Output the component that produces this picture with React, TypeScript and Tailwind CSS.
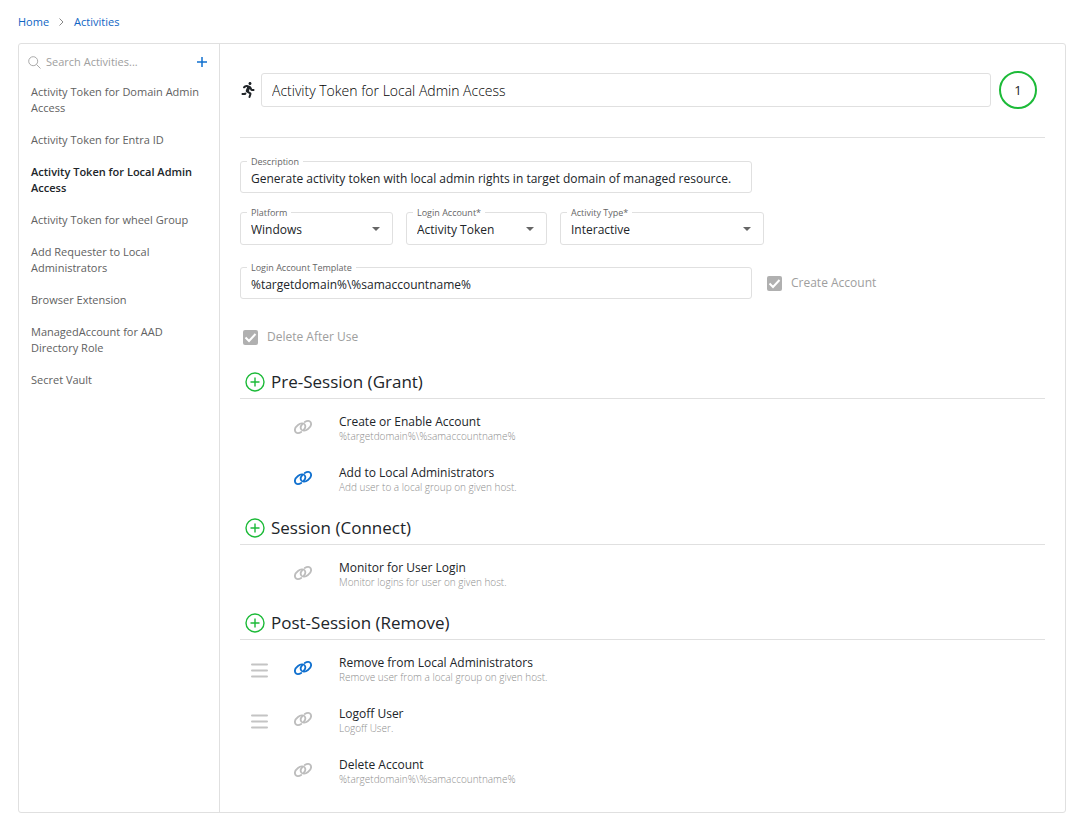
import { useState } from 'react';
import type { ReactNode } from 'react';
import { FaRunning } from 'react-icons/fa';

type Step = { title: string; detail: string; linked?: boolean; draggable?: boolean };

const ACTIVITIES = [
  'Activity Token for Domain Admin Access',
  'Activity Token for Entra ID',
  'Activity Token for Local Admin Access',
  'Activity Token for wheel Group',
  'Add Requester to Local Administrators',
  'Browser Extension',
  'ManagedAccount for AAD Directory Role',
  'Secret Vault',
];

const SECTIONS: Array<{ title: string; steps: Step[] }> = [
  {
    title: 'Pre-Session (Grant)',
    steps: [
      { title: 'Create or Enable Account', detail: '%targetdomain%\\%samaccountname%' },
      { title: 'Add to Local Administrators', detail: 'Add user to a local group on given host.', linked: true },
    ],
  },
  {
    title: 'Session (Connect)',
    steps: [{ title: 'Monitor for User Login', detail: 'Monitor logins for user on given host.' }],
  },
  {
    title: 'Post-Session (Remove)',
    steps: [
      { title: 'Remove from Local Administrators', detail: 'Remove user from a local group on given host.', linked: true, draggable: true },
      { title: 'Logoff User', detail: 'Logoff User.', draggable: true },
      { title: 'Delete Account', detail: '%targetdomain%\\%samaccountname%' },
    ],
  },
];

function ChainIcon() {
  return (
    <svg viewBox="0 0 18 14" className="h-[14px] w-[18px]" fill="none" stroke="currentColor" strokeWidth="1.8" strokeLinecap="round">
      <path d="M7.2 12C4.8 13.5 2.4 13.4 1.4 11.8C0.4 9.8 1.5 6.9 4 5C6.4 3.2 9.4 2.8 10.7 4.5C11.8 6 11.2 8.2 9.7 9.9" />
      <path d="M10.8 2C13.2 0.5 15.6 0.6 16.6 2.2C17.6 4.2 16.5 7.1 14 9C11.6 10.8 8.6 11.2 7.3 9.5C6.2 8 6.8 5.8 8.3 4.1" />
    </svg>
  );
}

function PlusCircleIcon() {
  return (
    <svg viewBox="0 0 20 20" className="size-5" fill="none" stroke="currentColor" strokeWidth="1.4">
      <circle cx="10" cy="10" r="9" />
      <path d="M10 5.5V14.5M5.5 10H14.5" />
    </svg>
  );
}

function Field({ id, label, className, children }: { id: string; label: string; className: string; children: ReactNode }) {
  return (
    <div className={`relative rounded-[3px] border border-[#e0e0e0] ${className}`}>
      <label htmlFor={id} className="absolute -top-2 left-[6px] bg-white px-1 text-[9px] leading-4 text-[#666]">{label}</label>
      {children}
    </div>
  );
}

function TextField({ id, label, value }: { id: string; label: string; value: string }) {
  return (
    <Field id={id} label={label} className="w-full max-w-[512px]">
      <input id={id} defaultValue={value} className="block h-[30px] w-full px-[10px] pt-[2px] text-xs outline-none" />
    </Field>
  );
}

function SelectField({ id, label, value, className }: { id: string; label: string; value: string; className: string }) {
  return (
    <Field id={id} label={label} className={className}>
      <select id={id} defaultValue={value} className="block h-[31px] w-full appearance-none bg-transparent px-[10px] pt-[2px] text-xs outline-none">
        <option>{value}</option>
      </select>
      <svg viewBox="0 0 8 4" className="pointer-events-none absolute top-[14px] right-3 h-1 w-2 fill-[#666]"><path d="M0 0H8L4 4Z" /></svg>
    </Field>
  );
}

function DisabledCheck({ label }: { label: string }) {
  return (
    <label className="flex items-center gap-[9px] text-xs leading-5 text-[#9e9e9e]">
      <span className="relative block size-[15px]">
        <input type="checkbox" checked disabled readOnly className="block size-[15px] appearance-none rounded-[2px] bg-[#b0b0b0]" />
        <svg viewBox="0 0 15 15" className="absolute inset-0" fill="none" stroke="white" strokeWidth="2"><path d="M2.5 7.5L6 11L12.5 4" /></svg>
      </span>
      {label}
    </label>
  );
}

function StepRow({ step }: { step: Step }) {
  return (
    <li className="flex h-[51px] items-start">
      <div className="w-[54px] pt-[15px] pl-[11px]">
        {step.draggable && (
          <button aria-label="Reorder" className="block text-[#c4c4c4]">
            <svg viewBox="0 0 17 15" className="h-[15px] w-[17px]" stroke="currentColor" strokeWidth="2" strokeLinecap="round"><path d="M1 1.5H16M1 7.5H16M1 13.5H16" /></svg>
          </button>
        )}
      </div>
      <button aria-label="Toggle link" className={`mt-[13px] w-[45px] ${step.linked ? 'text-[#1070cf]' : 'text-[#bdbdbd]'}`}><ChainIcon /></button>
      <div className="pt-[6px]">
        <p className="text-xs leading-[17px]">{step.title}</p>
        <p className="text-[10px] leading-[13px] font-light text-[#8e8e8e]">{step.detail}</p>
      </div>
    </li>
  );
}

export default function App() {
  const [active, setActive] = useState(ACTIVITIES[2]);

  return (
    <div className="px-[18px] py-[13px] font-['Open_Sans','Noto_Sans',sans-serif] text-[#212529]">
      <nav className="flex items-center gap-[10px] text-[11px] leading-[18px] text-[#0f65c4]">
        <a href="#home">Home</a>
        <svg viewBox="0 0 5 8" className="h-2 w-[5px]" fill="none" stroke="#888"><path d="M0.5 0.5L4 4L0.5 7.5" /></svg>
        <a href="#activities">Activities</a>
      </nav>

      <div className="mt-3 flex rounded-[3px] border border-[#e0e0e0]">
        <aside className="w-[201px] shrink-0 border-r border-[#e0e0e0] pt-2">
          <div className="flex h-5 items-center pr-3 pl-[9px]">
            <svg viewBox="0 0 13 13" className="size-[13px] shrink-0" fill="none" stroke="#aaa"><circle cx="5.2" cy="5.2" r="4.5" /><path d="M8.4 8.4L12.5 12.5" /></svg>
            <input aria-label="Search Activities" placeholder="Search Activities..." className="ml-[5px] min-w-0 flex-1 text-[11px] outline-none placeholder:text-[#a0a0a0]" />
            <button aria-label="Add activity" className="text-[#1070cf]">
              <svg viewBox="0 0 10 10" className="size-[10px]" stroke="currentColor" strokeWidth="1.5"><path d="M5 0V10M0 5H10" /></svg>
            </button>
          </div>
          <ul className="mt-1">
            {ACTIVITIES.map((name) => (
              <li key={name}>
                <button
                  onClick={() => setActive(name)}
                  className={`block w-full px-3 py-2 text-left text-[11px] leading-4 ${name === active ? 'font-semibold text-[#212529]' : 'text-[#616161]'}`}
                >
                  {name}
                </button>
              </li>
            ))}
          </ul>
        </aside>

        <main className="min-w-0 flex-1 px-5 pt-[27px] pb-[11px]">
          <header className="flex items-center border-b border-[#e0e0e0] pb-7">
            <FaRunning className="size-4 shrink-0" />
            <input aria-label="Activity name" defaultValue={ACTIVITIES[2]} className="mr-2 ml-[5px] h-[34px] min-w-0 flex-1 rounded-[3px] border border-[#e0e0e0] px-[10px] pt-px text-[14px] font-light text-black outline-none" />
            <span className="mr-2 flex size-[38px] items-center justify-center rounded-full border-2 border-[#1cba38] pt-px text-[13px]">1</span>
          </header>

          <div className="mt-[23px]">
            <TextField id="description" label="Description" value="Generate activity token with local admin rights in target domain of managed resource." />
          </div>
          <div className="mt-[19px] flex gap-[13px]">
            <SelectField id="platform" label="Platform" value="Windows" className="w-[153px]" />
            <SelectField id="login" label="Login Account*" value="Activity Token" className="w-[141px]" />
            <SelectField id="type" label="Activity Type*" value="Interactive" className="w-[204px]" />
          </div>
          <div className="mt-[22px] flex items-center gap-[15px]">
            <TextField id="template" label="Login Account Template" value="%targetdomain%\%samaccountname%" />
            <DisabledCheck label="Create Account" />
          </div>
          <div className="mt-7 mb-4 pl-[3px]">
            <DisabledCheck label="Delete After Use" />
          </div>

          {SECTIONS.map((section) => (
            <section key={section.title}>
              <div className="flex items-center gap-[6px] border-b border-[#e0e0e0] pt-[7px] pb-1 pl-[5px]">
                <button aria-label={`Add to ${section.title}`} className="text-[#1cba38]"><PlusCircleIcon /></button>
                <h2 className="text-[17px] leading-6">{section.title}</h2>
              </div>
              <ul className="pt-2">
                {section.steps.map((step) => <StepRow key={step.title} step={step} />)}
              </ul>
            </section>
          ))}
        </main>
      </div>
    </div>
  );
}
